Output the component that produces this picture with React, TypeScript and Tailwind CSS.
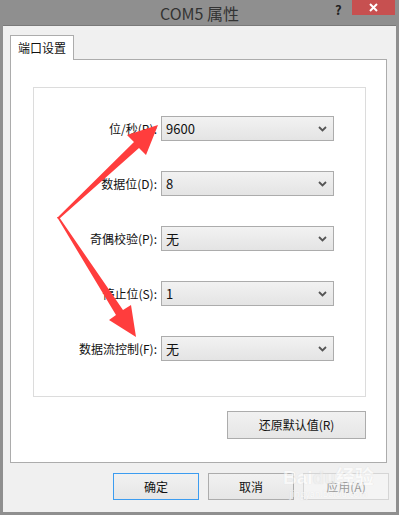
import React from 'react';

const rows = [
    { label: '位/秒(B):', value: '9600' },
    { label: '数据位(D):', value: '8' },
    { label: '奇偶校验(P):', value: '无' },
    { label: '停止位(S):', value: '1' },
    { label: '数据流控制(F):', value: '无' },
];

const font = { fontFamily: '"Noto Sans CJK SC", "Liberation Sans", sans-serif' };

function Combo({ value }: { value: string }) {
    return (
        <div className="flex h-[25px] w-[173px] items-center justify-between border border-[#acacac] bg-gradient-to-b from-[#f2f2f2] to-[#e4e4e4] pl-[4px] pr-[6px] text-[13px] text-[#111]">
            <span>{value}</span>
            <svg width="9" height="6" viewBox="0 0 9 6">
                <path d="M1 1 L4.5 4.5 L8 1" fill="none" stroke="#555" strokeWidth="1.8" />
            </svg>
        </div>
    );
}

function Btn({ children, kind }: { children: React.ReactNode; kind?: 'focus' | 'disabled' }) {
    const cls =
        kind === 'focus'
            ? 'border-[#3c9cf0] bg-gradient-to-b from-[#f1f1f1] to-[#e6e6e6] text-[#111]'
            : kind === 'disabled'
              ? 'border-[#d5d5d5] bg-[#f4f4f4] text-[#9a9a9a]'
              : 'border-[#acacac] bg-gradient-to-b from-[#f1f1f1] to-[#e6e6e6] text-[#111]';
    return (
        <div className={`flex h-[27px] w-[86px] items-center justify-center border text-[12px] ${cls}`}>{children}</div>
    );
}

export default function App() {
    return (
        <div className="relative flex h-[515px] w-[399px] flex-col bg-[#8f8f8f]" style={font}>
            {/* title bar */}
            <div className="relative flex h-[25px] items-center justify-center">
                <span className="text-[16px] text-[#333]">COM5 属性</span>
                <span className="absolute left-[335px] top-[0px] text-[13px] font-bold text-[#222]">?</span>
                <div className="absolute left-[352px] top-0 flex h-[15px] w-[43px] items-center justify-center bg-[#c75050]">
                    <svg width="9" height="9" viewBox="0 0 9 9">
                        <path d="M1 1 L8 8 M8 1 L1 8" stroke="#fff" strokeWidth="2" />
                    </svg>
                </div>
            </div>

            {/* client area */}
            <div className="mx-[3px] mb-[3px] flex flex-1 flex-col border-t border-[#7a7a7a] bg-[#f0f0f0] pl-[7px] pr-[9px] pt-[9px]">
                <div className="relative z-10 -mb-px flex h-[25px] w-[64px] items-center justify-center border border-b-0 border-[#acacac] bg-white text-[12px] text-[#111]">
                    端口设置
                </div>
                <div className="flex h-[404px] flex-col border border-[#acacac] bg-white pl-[22px] pr-[20px] pt-[27px]">
                    <div className="flex h-[310px] flex-col gap-[30px] border border-[#dcdcdc] pt-[28px]">
                        {rows.map((r) => (
                            <div key={r.label} className="flex items-center">
                                <div className="w-[127px] pr-[4px] text-right text-[12px] text-[#111]">{r.label}</div>
                                <Combo value={r.value} />
                            </div>
                        ))}
                    </div>
                    <div className="mt-[14px] flex justify-end">
                        <div className="flex h-[28px] w-[139px] items-center justify-center border border-[#acacac] bg-gradient-to-b from-[#f1f1f1] to-[#e6e6e6] text-[12px] text-[#111]">
                            还原默认值(R)
                        </div>
                    </div>
                </div>
                <div className="-mr-[2px] mt-[10px] flex justify-end gap-[9px]">
                    <Btn kind="focus">确定</Btn>
                    <Btn>取消</Btn>
                    <Btn kind="disabled">应用(A)</Btn>
                </div>
            </div>

            {/* watermark */}
            <div className="pointer-events-none absolute left-[283px] top-[468px] flex flex-col items-center leading-none text-[#ffffff] opacity-60" style={{ textShadow: '0 0 1px #d0d0d0' }}>
                <span className="text-[19px] font-bold" style={{ fontFamily: '"Liberation Sans", "Noto Sans CJK SC", sans-serif' }}>Bai<span className="text-[#ececec]">du</span>经验</span>
                <span className="mt-[2px] text-[9px]">jingyan.baidu.com</span>
            </div>

            {/* red arrows */}
            <svg className="pointer-events-none absolute left-0 top-0" width="399" height="515" viewBox="0 0 399 515">
                <polygon points="57,218 134,142 127,135 158,125 146,155 139,148 59,219" fill="#ff3d3d" />
                <polygon points="57,217 116,315 109,320 136,337 131,305 123,310 59,217" fill="#ff3d3d" />
            </svg>
        </div>
    );
}
